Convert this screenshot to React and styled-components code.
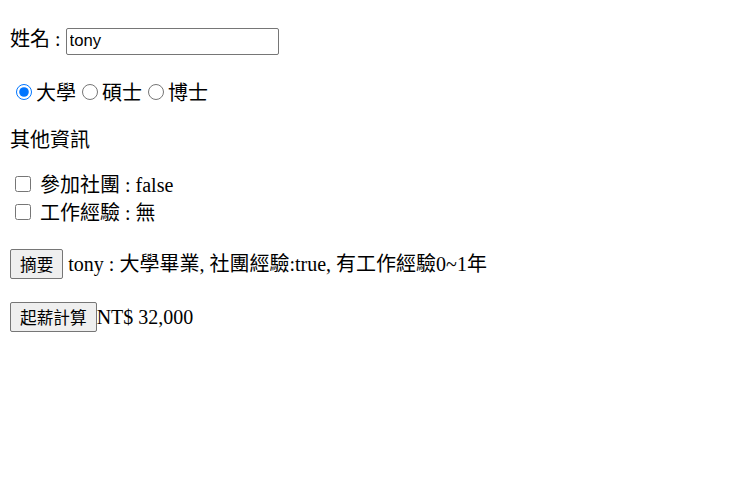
import styled, { createGlobalStyle } from 'styled-components';

const GlobalStyle = createGlobalStyle`
  body {
    margin: 10px;
    background: #ffffff;
    color: #000000;
    font-family: "Liberation Serif", "Noto Sans CJK TC", serif;
    font-size: 20px;
  }
`;

const Page = styled.div`
  display: block;
`;

const Para = styled.p`
  margin: ${(p) => p.$top ?? 20}px 0 0;
  line-height: 27px;
`;

const Lines = styled.div`
  margin: 17px 0 0;
  display: flex;
  flex-direction: column;
  line-height: 28px;
`;

const NameInput = styled.input`
  box-sizing: border-box;
  font-family: "Liberation Sans", "Noto Sans CJK TC", sans-serif;
  font-size: 16.67px;
  width: 213px;
  height: 27px;
  padding: 1px 3px;
  border: 1px solid #767676;
  border-radius: 2px;
  color: #000;
`;

const Radio = styled.input.attrs({ type: 'radio' })`
  width: 16px;
  height: 16px;
  margin: 4px 4px 0 6px;
`;

const Check = styled.input.attrs({ type: 'checkbox' })`
  width: 16px;
  height: 16px;
  margin: 4px 4px 4px 5px;
`;

const Button = styled.button`
  box-sizing: border-box;
  height: 30px;
  font-family: "Noto Sans CJK TC", "Liberation Sans", sans-serif;
  font-size: 16.67px;
  padding: 0 9px;
  border: 1px solid #767676;
  border-radius: 2px;
  background: #efefef;
  color: #000;
`;

export default function App() {
  return (
    <Page>
      <GlobalStyle />
      <Para $top={16}>
        姓名 : <NameInput defaultValue="tony" />
      </Para>
      <Para $top={25}>
        <Radio name="edu" defaultChecked />大學<Radio name="edu" />碩士<Radio name="edu" />博士
      </Para>
      <Para>其他資訊</Para>
      <Lines>
        <label>
          <Check /> 參加社團 : false
        </label>
        <label>
          <Check /> 工作經驗 : 無
        </label>
      </Lines>
      <Para $top={22}>
        <Button>摘要</Button> tony : 大學畢業, 社團經驗:true, 有工作經驗0~1年
      </Para>
      <Para $top={23}>
        <Button>起薪計算</Button>NT$ 32,000
      </Para>
    </Page>
  );
}
